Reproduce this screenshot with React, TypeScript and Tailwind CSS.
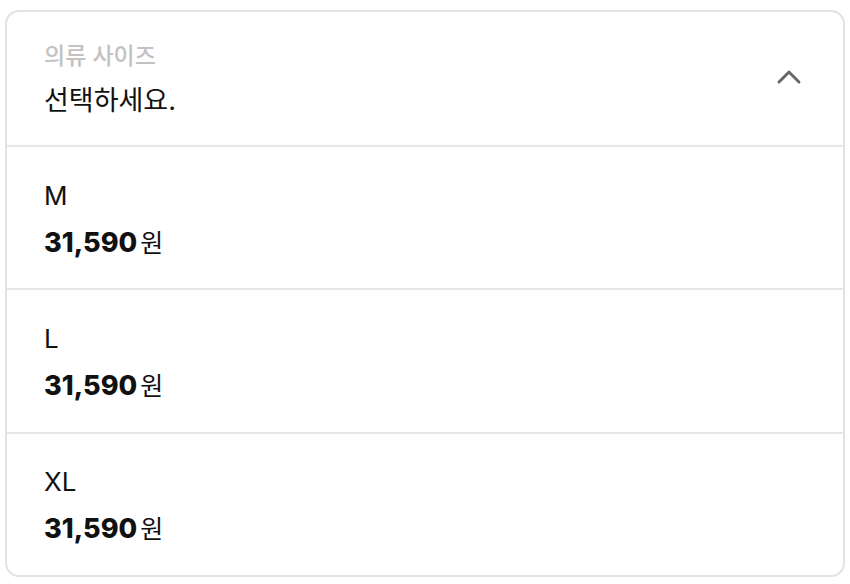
import { ChevronUp } from "lucide-react";

const sizes = [
  { name: "M", price: "31,590" },
  { name: "L", price: "31,590" },
  { name: "XL", price: "31,590" },
];

export default function App() {
  return (
    <div
      className="w-[850px] h-[584px] bg-white px-[5px] pt-[10px]"
      style={{ fontFamily: 'Inter, "Noto Sans CJK KR", sans-serif' }}
    >
      <div className="h-[567px] rounded-[14px] border-2 border-[#e2e2e2] overflow-hidden flex flex-col">
        {/* 선택 헤더 */}
        <div className="h-[135px] flex items-center justify-between pl-[37px] pr-[34px] border-b-2 border-[#e6e6e6]">
          <div className="flex flex-col pt-[3px]">
            <span className="text-[23px] leading-[30px] font-medium text-[#c2c2c2]">의류 사이즈</span>
            <span className="mt-[12px] text-[27px] leading-[36px] text-[#111]">선택하세요.</span>
          </div>
          <ChevronUp className="w-[40px] h-[40px] mb-[4px] text-[#666]" strokeWidth={1.7} />
        </div>

        {/* 사이즈 목록 */}
        {sizes.map((s, i) => (
          <div
            key={s.name}
            className={`flex-1 flex flex-col justify-center pl-[37px] pt-[3px] ${
              i < sizes.length - 1 ? "border-b-2 border-[#e6e6e6]" : ""
            }`}
          >
            <span className="text-[26px] leading-[32px] text-[#111]">{s.name}</span>
            <div className="mt-[15px] flex items-baseline">
              <span className="text-[27px] leading-[32px] font-extrabold text-[#111]">{s.price}</span>
              <span className="ml-[3px] text-[25px] leading-[32px] text-[#111]">원</span>
            </div>
          </div>
        ))}
      </div>
    </div>
  );
}
